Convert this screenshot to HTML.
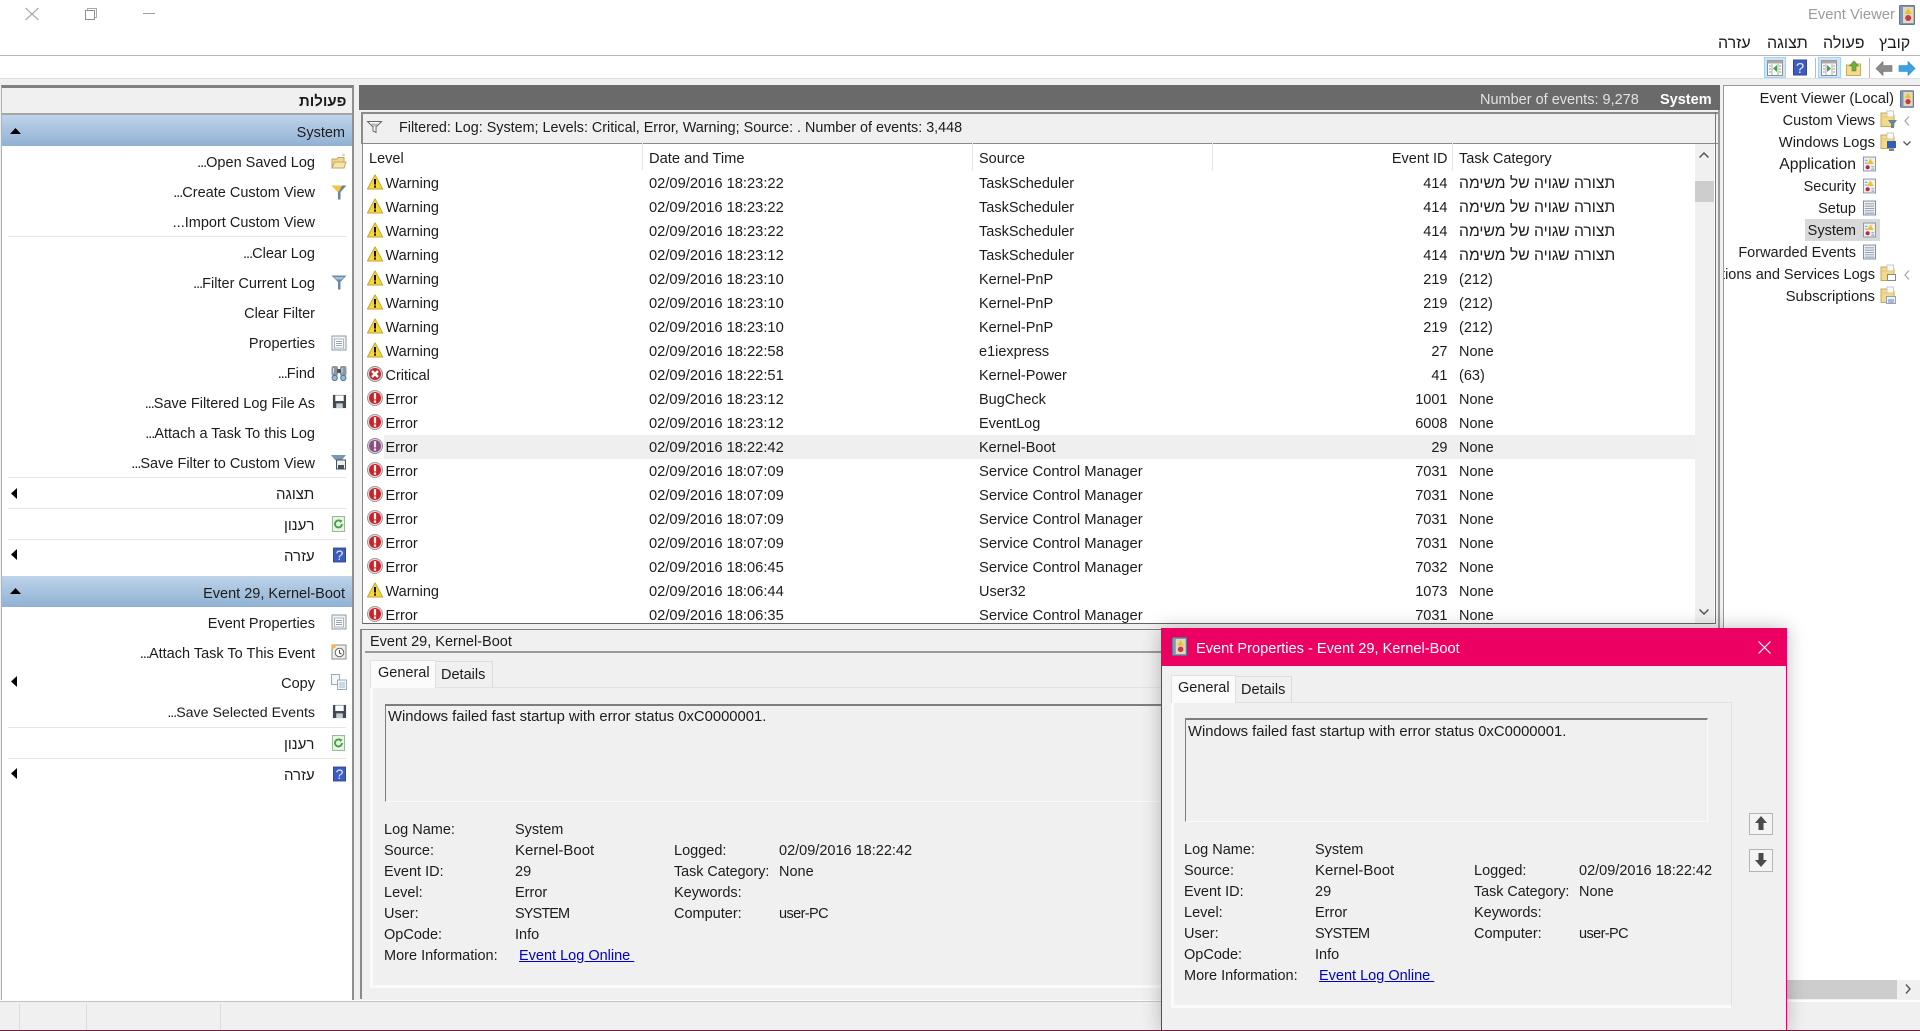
<!DOCTYPE html>
<html lang="en"><head><meta charset="utf-8"><title>Event Viewer</title>
<style>
html,body{margin:0;padding:0;width:1920px;height:1031px;overflow:hidden;background:#f0f0f0}
body{font-family:"Liberation Sans","DejaVu Sans",sans-serif;font-size:14.5px;color:#1c1c1c;position:relative}
.a{position:absolute}
.t{position:absolute;white-space:nowrap;line-height:20px;height:20px;margin-top:1px}
.l{position:absolute;right:1605px;white-space:nowrap;line-height:20px;height:20px;text-align:right;margin-top:1px}
.tr{position:absolute;right:25px;white-space:nowrap;line-height:20px;height:20px;text-align:right;margin-top:1px}
.d{letter-spacing:-1px}
svg{position:absolute;overflow:visible}
.sep{position:absolute;left:8px;width:338px;height:1px;background:#e6e6e6}
.r{position:relative;height:24px;line-height:24px;white-space:nowrap}
.r span{position:absolute;top:1px}
.r svg{left:4px;top:3px}
.hd span{top:2px}
.c1{left:22.5px}.c2{left:286px;font-size:14.7px}.c3{left:616px}.c4{left:984px;width:100.5px;text-align:right}.c5{left:1096px}
.he{font-size:15.7px}
.sel{background:linear-gradient(#efefef,#efefef) no-repeat 21px 0}
.h{position:absolute;top:143px;height:27px;width:1px;background:#e4e4e4}
a{color:#0000c8;text-decoration:underline}
</style></head><body>
<svg width="0" height="0" style="position:absolute">
<defs>
<symbol id="w" viewBox="0 0 16 16"><polygon points="8,.8 15.6,15 .4,15" fill="#f6d838" stroke="#c9a326" stroke-linejoin="round"/><rect x="7" y="5" width="2" height="5.6" fill="#111"/><rect x="7" y="11.6" width="2" height="2" fill="#111"/></symbol>
<symbol id="e" viewBox="0 0 16 16"><circle cx="8" cy="8" r="7.500" fill="#e9dcdc" stroke="#9d9d9d"/><circle cx="8" cy="8" r="6" fill="#cc2229"/><rect x="6.900" y="3.200" width="2.200" height="6.200" fill="#fff"/><rect x="6.900" y="10.500" width="2.200" height="2.200" fill="#fff"/></symbol>
<symbol id="es" viewBox="0 0 16 16"><circle cx="8" cy="8" r="7.500" fill="#d3cdd8" stroke="#8f8f9d"/><circle cx="8" cy="8" r="6" fill="#8d4c7d"/><rect x="6.900" y="3.200" width="2.200" height="6.200" fill="#eee"/><rect x="6.900" y="10.500" width="2.200" height="2.200" fill="#eee"/></symbol>
<symbol id="c" viewBox="0 0 16 16"><circle cx="8" cy="8" r="7.500" fill="#ddd" stroke="#8d8d8d"/><circle cx="8" cy="8" r="6" fill="#c42a32"/><path d="M5 5l6 6M11 5l-6 6" stroke="#fff" stroke-width="2.400"/></symbol>
<symbol id="logw" viewBox="0 0 14 16"><rect x=".5" y=".5" width="13" height="15" fill="#eef0f2" stroke="#7f93aa"/><path d="M2 4h3M2 7h3M9 11h3M9 13.500h3" stroke="#7f93aa"/><polygon points="8,2 11.500,8 4.500,8" fill="#eec22e"/><circle cx="5" cy="11.500" r="2.200" fill="#b32a3c"/></symbol>
<symbol id="log" viewBox="0 0 14 16"><rect x=".5" y=".5" width="13" height="15" fill="#eef1f4" stroke="#77899b"/><path d="M2 3.500h10M2 6h10M2 8.500h10M2 11h10M2 13.500h10" stroke="#8599ab"/></symbol>
<symbol id="evt" viewBox="0 0 16 20"><rect x=".5" y=".5" width="15" height="19" rx="1" fill="#7f96b4" stroke="#66768c"/><rect x="4" y="2" width="10.500" height="16" fill="#e3d9b8"/><polygon points="9.200,3 12.700,9 5.700,9" fill="#e8bf2c"/><circle cx="9.200" cy="13" r="3" fill="#c33b46"/></symbol>
<symbol id="fo" viewBox="0 0 16 18"><path d="M1 16.500V3h5l1.500 2H14v11.500z" fill="#f3d98a" stroke="#c4a85c"/><rect x="7" y="1" width="6.500" height="6" fill="#fafafa" stroke="#c9c9c9"/><path d="M1 7h13" stroke="#e3c676"/></symbol>
<symbol id="open" viewBox="0 0 16 16"><path d="M1 14V5h5l1-1.500h6V14z" fill="#f0d993" stroke="#bfa463"/><path d="M1 14l2.500-6H15l-2 6z" fill="#f8e6a8" stroke="#c3a864"/><path d="M11 1h3" stroke="#9bb"/></symbol>
<symbol id="fy" viewBox="0 0 16 16"><path d="M.5 1.500h15L9.500 8v7.500H7V8z" fill="#67839f"/><path d="M.5 1.500H11L8 7.500H6z" fill="#f4c640"/></symbol>
<symbol id="fb" viewBox="0 0 16 16"><path d="M.5 1.500h15L9.500 8v7.500H7V8z" fill="#678aa8"/><path d="M3 3h10l-2.500 2.500h-5z" fill="#a9c0d4"/></symbol>
<symbol id="prop" viewBox="0 0 16 16"><rect x="1" y="1" width="14" height="14" fill="#f2f2f2" stroke="#8e99a3"/><rect x="3.500" y="4" width="9" height="9" fill="#fff" stroke="#a9b6c1"/><path d="M5 6.500h6M5 8.500h6M5 10.500h6" stroke="#94a4b1"/></symbol>
<symbol id="bin" viewBox="0 0 16 16"><rect x=".5" y="1" width="6.500" height="10" rx="2" fill="#8c97a3"/><rect x="9" y="1" width="6.500" height="10" rx="2" fill="#8c97a3"/><path d="M2.500 3v5M11 3v5" stroke="#d5dbe1"/><rect x="6" y="4" width="4" height="4" fill="#4c5661"/><circle cx="3.700" cy="13" r="2.600" fill="#8fbce0" stroke="#4d7499"/><circle cx="12.300" cy="13" r="2.600" fill="#8fbce0" stroke="#4d7499"/></symbol>
<symbol id="sv" viewBox="0 0 16 16"><rect x="1" y="1" width="14" height="14" fill="#3f4a54"/><rect x="3.500" y="1.500" width="9" height="6" fill="#fff"/><rect x="4.500" y="10" width="7" height="5" fill="#c9ced2"/></symbol>
<symbol id="sf" viewBox="0 0 16 16"><path d="M0 1h15l-4 5H4z" fill="#7b97ae"/><rect x="5.500" y="6" width="9" height="9" fill="#eee" stroke="#48525c"/><rect x="7" y="11" width="6" height="4" fill="#48525c"/></symbol>
<symbol id="rf" viewBox="0 0 16 16"><rect x="1.500" y=".5" width="12" height="15" fill="#e8f3e2" stroke="#9cb79a"/><path d="M11 8a3.500 3.500 0 1 1-1.200-2.700" fill="none" stroke="#3fa145" stroke-width="1.800"/><path d="M8 3.500l3.500 1-2 2.500z" fill="#3fa145"/></symbol>
<symbol id="hp" viewBox="0 0 14 16"><rect x=".5" y=".5" width="13" height="15" fill="#3d5cc0" stroke="#2f4599"/><text x="7" y="13.500" font-size="15" fill="#e8eefc" text-anchor="middle" font-family="Liberation Sans">?</text></symbol>
<symbol id="clk" viewBox="0 0 16 16"><rect x="1" y="1" width="14" height="14" fill="#f0eee8" stroke="#8c8c8c"/><circle cx="8.500" cy="8.500" r="4.300" fill="#fff" stroke="#666"/><path d="M8.500 6v3l2 1" stroke="#444" fill="none"/><circle cx="2.500" cy="2.500" r="2" fill="#f4b642"/></symbol>
<symbol id="cp" viewBox="0 0 16 16"><rect x=".5" y=".5" width="8" height="10" fill="#f5f8fa" stroke="#98abba"/><rect x="6.500" y="6" width="9" height="9.500" fill="#f5f8fa" stroke="#98abba"/><path d="M8 9h6M8 11h6M8 13h6" stroke="#a8b9c7"/></symbol>
<symbol id="tb1" viewBox="0 0 16 16"><rect x=".5" y=".5" width="15" height="15" fill="#fff" stroke="#8c8c8c"/><rect x=".5" y=".5" width="15" height="3" fill="#a8a8a8"/><path d="M5 4v11M11 4v11" stroke="#a8a8a8"/><path d="M2 6h2M2 9h2M2 12h2M12 6h2M12 9h2M12 12h2" stroke="#909090"/></symbol>
</defs></svg>

<!-- title bar -->
<div class="a" style="left:0;top:0;width:1920px;height:55px;background:#fff"></div>
<svg style="left:25px;top:8px" width="14" height="12" viewBox="0 0 14 12"><path d="M.5 0l13 12M13.500 0L.5 12" stroke="#9a9a9a" fill="none"/></svg>
<svg style="left:85px;top:8px" width="12" height="12" viewBox="0 0 12 12"><path d="M2.500 2.500V.5h9v9h-2" stroke="#aaa" fill="none"/><rect x=".5" y="2.500" width="9" height="9" fill="#fff" stroke="#909090"/></svg>
<div class="a" style="left:143px;top:13px;width:12px;height:1px;background:#a0a0a0"></div>
<div class="t" style="left:1808px;top:4px;color:#9a9a9a;font-size:14.8px">Event Viewer</div>
<svg style="left:1899px;top:5px" width="16" height="20"><use href="#evt"/></svg>

<!-- menu -->
<div class="t" dir="rtl" style="left:1879px;top:33px;font-size:16px">קובץ</div>
<div class="t" dir="rtl" style="left:1823px;top:33px;font-size:16px">פעולה</div>
<div class="t" dir="rtl" style="left:1767px;top:33px;font-size:16px">תצוגה</div>
<div class="t" dir="rtl" style="left:1718px;top:33px;font-size:16px">עזרה</div>
<div class="a" style="left:0;top:55px;width:1920px;height:1px;background:#b9b9b9"></div>

<!-- toolbar -->
<div class="a" style="left:0;top:56px;width:1920px;height:22px;background:#fff"></div>
<div class="a" style="left:0;top:78px;width:1920px;height:1px;background:#dedede"></div>
<div class="a" style="left:1764px;top:57px;width:22px;height:21px;background:#cfe6f8;border:1px solid #a5d2f4;box-sizing:border-box"></div>
<svg style="left:1767px;top:60px" width="16" height="16"><use href="#tb1"/></svg><svg style="left:1773px;top:65px" width="4" height="7"><polygon points="0,3.500 4,0 4,7" fill="#3aa24a"/></svg>
<svg style="left:1793px;top:59px" width="14" height="17"><use href="#hp"/></svg>
<div class="a" style="left:1815px;top:58px;width:1px;height:20px;background:#bbb"></div>
<div class="a" style="left:1818px;top:57px;width:23px;height:21px;background:#cfe6f8;border:1px solid #a5d2f4;box-sizing:border-box"></div>
<svg style="left:1821px;top:60px" width="16" height="16"><use href="#tb1"/></svg><svg style="left:1827px;top:65px" width="4" height="7"><polygon points="4,3.500 0,0 0,7" fill="#3aa24a"/></svg>
<svg style="left:1846px;top:60px" width="15" height="16" viewBox="0 0 15 16"><path d="M.5 15.500V5h5l1-1h8v11.500z" fill="#f4db8f" stroke="#c7ab60"/><path d="M8 1l4.500 5h-2.500v5H6V6H3.500z" fill="#6fae3f" stroke="#4f8a2e" stroke-width=".6"/></svg>
<div class="a" style="left:1869px;top:58px;width:1px;height:20px;background:#bbb"></div>
<svg style="left:1876px;top:61px" width="16" height="15" viewBox="0 0 16 15"><path d="M0 7.500L7 .5v4h9v6H7v4z" fill="#8c8c8c" stroke="#6d6d6d" stroke-width=".6"/></svg>
<svg style="left:1899px;top:61px" width="16" height="15" viewBox="0 0 16 15"><path d="M16 7.500L9 .5v4H0v6h9v4z" fill="#3ca2e4" stroke="#2a84c4" stroke-width=".6"/></svg>

<!-- left actions pane -->
<div class="a" style="left:1px;top:85px;width:353px;height:915px;background:#fff;border-top:3px solid #808080;border-left:1px solid #b0b0b0;border-right:2px solid #8f8f8f;box-sizing:border-box"></div>
<div class="a" style="left:2px;top:88px;width:350px;height:25px;background:#f0f0f0;border-bottom:2px solid #a6a6a6"></div>
<div class="t" dir="rtl" style="left:299px;top:91px;font-weight:bold;font-size:15px">פעולות</div>

<div class="a" style="left:2px;top:115px;width:350px;height:31px;background:linear-gradient(#bed4ea,#90b1d3)"></div>
<svg style="left:10px;top:128px" width="11" height="6"><polygon points="5.500,0 11,6 0,6" fill="#000"/></svg>
<div class="tr" style="right:1575px;top:122px">System</div>

<svg style="left:331px;top:154px" width="16" height="16"><use href="#open"/></svg>
<div class="l" style="top:152px"><span class="d">...</span>Open Saved Log</div>
<svg style="left:331px;top:184px" width="16" height="16"><use href="#fy"/></svg>
<div class="l" style="top:182px"><span class="d">...</span>Create Custom View</div>
<div class="l" style="top:212px">...Import Custom View</div>
<div class="sep" style="top:236px"></div>
<div class="l" style="top:243px"><span class="d">...</span>Clear Log</div>
<svg style="left:331px;top:274px" width="16" height="16"><use href="#fb"/></svg>
<div class="l" style="top:273px"><span class="d">...</span>Filter Current Log</div>
<div class="l" style="top:303px">Clear Filter</div>
<svg style="left:331px;top:335px" width="16" height="16"><use href="#prop"/></svg>
<div class="l" style="top:333px">Properties</div>
<svg style="left:331px;top:365px" width="16" height="16"><use href="#bin"/></svg>
<div class="l" style="top:363px"><span class="d">...</span>Find</div>
<svg style="left:332px;top:394px" width="15" height="15"><use href="#sv"/></svg>
<div class="l" style="top:393px"><span class="d">...</span>Save Filtered Log File As</div>
<div class="l" style="top:423px"><span class="d">...</span>Attach a Task To this Log</div>
<svg style="left:331px;top:454px" width="16" height="16"><use href="#sf"/></svg>
<div class="l" style="top:453px"><span class="d">...</span>Save Filter to Custom View</div>
<div class="sep" style="top:477px"></div>
<svg style="left:11px;top:488px" width="6" height="11"><polygon points="0,5.500 6,0 6,11" fill="#000"/></svg>
<div class="t" dir="rtl" style="left:276px;top:484px;font-size:15px">תצוגה</div>
<div class="sep" style="top:508px"></div>
<svg style="left:331px;top:516px" width="16" height="16"><use href="#rf"/></svg>
<div class="t" dir="rtl" style="left:284px;top:515px;font-size:15px">רענון</div>
<div class="sep" style="top:539px"></div>
<svg style="left:11px;top:549px" width="6" height="11"><polygon points="0,5.500 6,0 6,11" fill="#000"/></svg>
<svg style="left:333px;top:547px" width="13" height="16"><use href="#hp"/></svg>
<div class="t" dir="rtl" style="left:284px;top:546px;font-size:15px">עזרה</div>

<div class="a" style="left:2px;top:576px;width:350px;height:31px;background:linear-gradient(#bed4ea,#90b1d3)"></div>
<svg style="left:10px;top:588px" width="11" height="6"><polygon points="5.500,0 11,6 0,6" fill="#000"/></svg>
<div class="tr" style="right:1575px;top:583px">Event 29, Kernel-Boot</div>

<svg style="left:331px;top:614px" width="16" height="16"><use href="#prop"/></svg>
<div class="l" style="top:613px">Event Properties</div>
<svg style="left:331px;top:644px" width="16" height="16"><use href="#clk"/></svg>
<div class="l" style="top:643px"><span class="d">...</span>Attach Task To This Event</div>
<svg style="left:11px;top:676px" width="6" height="11"><polygon points="0,5.500 6,0 6,11" fill="#000"/></svg>
<svg style="left:331px;top:674px" width="16" height="16"><use href="#cp"/></svg>
<div class="l" style="top:673px">Copy</div>
<svg style="left:332px;top:704px" width="15" height="15"><use href="#sv"/></svg>
<div class="l" style="top:702px;font-size:14.2px"><span class="d">...</span>Save Selected Events</div>
<div class="sep" style="top:727px"></div>
<svg style="left:331px;top:735px" width="16" height="16"><use href="#rf"/></svg>
<div class="t" dir="rtl" style="left:284px;top:734px;font-size:15px">רענון</div>
<div class="sep" style="top:758px"></div>
<svg style="left:11px;top:768px" width="6" height="11"><polygon points="0,5.500 6,0 6,11" fill="#000"/></svg>
<svg style="left:333px;top:766px" width="13" height="16"><use href="#hp"/></svg>
<div class="t" dir="rtl" style="left:284px;top:765px;font-size:15px">עזרה</div>

<!-- center header -->
<div class="a" style="left:359px;top:85px;width:1361px;height:25px;background:#6a6a6a"></div>
<div class="t" style="left:1480px;top:89px;color:#e2e2e2">Number of events: 9,278</div>
<div class="t" style="left:1660px;top:89px;color:#fff;font-weight:bold">System</div>

<!-- filter bar -->
<div class="a" style="left:361px;top:112px;width:1358px;height:32px;background:#f0f0f0;border:1px solid #8a8a8a;border-width:2px 1px 1px 2px;box-sizing:border-box"></div>
<svg style="left:367px;top:121px" width="15" height="12" viewBox="0 0 15 12"><path d="M.5.500h14L9 6v5.500L6 10V6z" fill="#fff" stroke="#666"/><path d="M3 2.500h9L9 5.500H6z" fill="#bbb"/></svg>
<div class="t" style="left:399px;top:117px;font-size:14.35px">Filtered: Log: System; Levels: Critical, Error, Warning; Source: . Number of events: 3,448</div>

<!-- list -->
<div class="a" style="left:362px;top:144px;width:1353px;height:480px;background:#fff;border-bottom:1px solid #666;border-left:1px solid #8a8a8a;box-sizing:border-box;overflow:hidden">
<div class="r hd" style="height:27px;line-height:27px"><span style="left:6px">Level</span><span class="c2">Date and Time</span><span class="c3">Source</span><span class="c4">Event ID</span><span class="c5">Task Category</span></div>
<div style="width:1332px">
<div class="r"><svg width="16" height="16"><use href="#w"/></svg><span class="c1">Warning</span><span class="c2">02/09/2016 18:23:22</span><span class="c3">TaskScheduler</span><span class="c4">414</span><span class="c5 he" dir="rtl">תצורה שגויה של משימה</span></div>
<div class="r"><svg width="16" height="16"><use href="#w"/></svg><span class="c1">Warning</span><span class="c2">02/09/2016 18:23:22</span><span class="c3">TaskScheduler</span><span class="c4">414</span><span class="c5 he" dir="rtl">תצורה שגויה של משימה</span></div>
<div class="r"><svg width="16" height="16"><use href="#w"/></svg><span class="c1">Warning</span><span class="c2">02/09/2016 18:23:22</span><span class="c3">TaskScheduler</span><span class="c4">414</span><span class="c5 he" dir="rtl">תצורה שגויה של משימה</span></div>
<div class="r"><svg width="16" height="16"><use href="#w"/></svg><span class="c1">Warning</span><span class="c2">02/09/2016 18:23:12</span><span class="c3">TaskScheduler</span><span class="c4">414</span><span class="c5 he" dir="rtl">תצורה שגויה של משימה</span></div>
<div class="r"><svg width="16" height="16"><use href="#w"/></svg><span class="c1">Warning</span><span class="c2">02/09/2016 18:23:10</span><span class="c3">Kernel-PnP</span><span class="c4">219</span><span class="c5">(212)</span></div>
<div class="r"><svg width="16" height="16"><use href="#w"/></svg><span class="c1">Warning</span><span class="c2">02/09/2016 18:23:10</span><span class="c3">Kernel-PnP</span><span class="c4">219</span><span class="c5">(212)</span></div>
<div class="r"><svg width="16" height="16"><use href="#w"/></svg><span class="c1">Warning</span><span class="c2">02/09/2016 18:23:10</span><span class="c3">Kernel-PnP</span><span class="c4">219</span><span class="c5">(212)</span></div>
<div class="r"><svg width="16" height="16"><use href="#w"/></svg><span class="c1">Warning</span><span class="c2">02/09/2016 18:22:58</span><span class="c3">e1iexpress</span><span class="c4">27</span><span class="c5">None</span></div>
<div class="r"><svg width="16" height="16"><use href="#c"/></svg><span class="c1">Critical</span><span class="c2">02/09/2016 18:22:51</span><span class="c3">Kernel-Power</span><span class="c4">41</span><span class="c5">(63)</span></div>
<div class="r"><svg width="16" height="16"><use href="#e"/></svg><span class="c1">Error</span><span class="c2">02/09/2016 18:23:12</span><span class="c3">BugCheck</span><span class="c4">1001</span><span class="c5">None</span></div>
<div class="r"><svg width="16" height="16"><use href="#e"/></svg><span class="c1">Error</span><span class="c2">02/09/2016 18:23:12</span><span class="c3">EventLog</span><span class="c4">6008</span><span class="c5">None</span></div>
<div class="r sel"><svg width="16" height="16"><use href="#es"/></svg><span class="c1">Error</span><span class="c2">02/09/2016 18:22:42</span><span class="c3">Kernel-Boot</span><span class="c4">29</span><span class="c5">None</span></div>
<div class="r"><svg width="16" height="16"><use href="#e"/></svg><span class="c1">Error</span><span class="c2">02/09/2016 18:07:09</span><span class="c3" style="font-size:14.8px">Service Control Manager</span><span class="c4">7031</span><span class="c5">None</span></div>
<div class="r"><svg width="16" height="16"><use href="#e"/></svg><span class="c1">Error</span><span class="c2">02/09/2016 18:07:09</span><span class="c3" style="font-size:14.8px">Service Control Manager</span><span class="c4">7031</span><span class="c5">None</span></div>
<div class="r"><svg width="16" height="16"><use href="#e"/></svg><span class="c1">Error</span><span class="c2">02/09/2016 18:07:09</span><span class="c3" style="font-size:14.8px">Service Control Manager</span><span class="c4">7031</span><span class="c5">None</span></div>
<div class="r"><svg width="16" height="16"><use href="#e"/></svg><span class="c1">Error</span><span class="c2">02/09/2016 18:07:09</span><span class="c3" style="font-size:14.8px">Service Control Manager</span><span class="c4">7031</span><span class="c5">None</span></div>
<div class="r"><svg width="16" height="16"><use href="#e"/></svg><span class="c1">Error</span><span class="c2">02/09/2016 18:06:45</span><span class="c3" style="font-size:14.8px">Service Control Manager</span><span class="c4">7032</span><span class="c5">None</span></div>
<div class="r"><svg width="16" height="16"><use href="#w"/></svg><span class="c1">Warning</span><span class="c2">02/09/2016 18:06:44</span><span class="c3">User32</span><span class="c4">1073</span><span class="c5">None</span></div>
<div class="r"><svg width="16" height="16"><use href="#e"/></svg><span class="c1">Error</span><span class="c2">02/09/2016 18:06:35</span><span class="c3" style="font-size:14.8px">Service Control Manager</span><span class="c4">7031</span><span class="c5">None</span></div>
</div>
</div>
<div class="h" style="left:642px"></div><div class="h" style="left:972px"></div><div class="h" style="left:1212px"></div><div class="h" style="left:1452px"></div>

<!-- list scrollbar -->
<div class="a" style="left:1695px;top:144px;width:19px;height:479px;background:#f0f0f0"></div>
<div class="a" style="left:1695px;top:181px;width:19px;height:21px;background:#cdcdcd"></div>
<svg style="left:1699px;top:152px" width="10" height="6"><path d="M.5 5.500L5 1l4.500 4.500" fill="none" stroke="#555" stroke-width="1.500"/></svg>
<svg style="left:1699px;top:609px" width="10" height="6"><path d="M.5.500L5 5l4.500-4.500" fill="none" stroke="#555" stroke-width="1.500"/></svg>
<div class="a" style="left:1715px;top:112px;width:1px;height:512px;background:#777"></div>
<div class="a" style="left:1718px;top:110px;width:2px;height:518px;background:#9a9a9a"></div>

<!-- bottom pane -->
<div class="a" style="left:360px;top:629px;width:1363px;height:370px;background:#f0f0f0;border-top:1px solid #808080;border-left:2px solid #8a8a8a;box-sizing:border-box"></div>
<div class="t" style="left:370px;top:631px">Event 29, Kernel-Boot</div>
<div class="a" style="left:365px;top:651px;width:1358px;height:2px;background:#9a9a9a"></div>
<div class="a" style="left:370px;top:687px;width:1353px;height:301px;background:#f0f0f0;border:1px solid #e2e2e2;border-left:3px solid #fafafa;border-bottom:3px solid #fafafa;box-sizing:border-box"></div>
<div class="a" style="left:370px;top:660px;width:66px;height:28px;background:#fbfbfb;border:1px solid #e2e2e2;border-bottom:0;box-sizing:border-box"></div>
<div class="a" style="left:436px;top:661px;width:57px;height:26px;background:#f0f0f0;border:1px solid #dcdcdc;border-bottom:0;border-left:0;box-sizing:border-box"></div>
<div class="t" style="left:378px;top:662px">General</div>
<div class="t" style="left:441px;top:664px">Details</div>
<div class="a" style="left:385px;top:704px;width:800px;height:98px;border-top:2px solid #7e7e7e;border-left:1px solid #7e7e7e;border-bottom:1px solid #fafafa;box-sizing:border-box"></div>
<div class="t" style="left:388px;top:706px;font-size:14.8px">Windows failed fast startup with error status 0xC0000001.</div>
<div class="t" style="left:384px;top:819px">Log Name:</div><div class="t" style="left:515px;top:819px">System</div>
<div class="t" style="left:384px;top:840px">Source:</div><div class="t" style="left:515px;top:840px;font-size:15px">Kernel-Boot</div>
<div class="t" style="left:674px;top:840px">Logged:</div><div class="t" style="left:779px;top:840px">02/09/2016 18:22:42</div>
<div class="t" style="left:384px;top:861px">Event ID:</div><div class="t" style="left:515px;top:861px">29</div>
<div class="t" style="left:674px;top:861px;font-size:14.3px">Task Category:</div><div class="t" style="left:779px;top:861px">None</div>
<div class="t" style="left:384px;top:882px">Level:</div><div class="t" style="left:515px;top:882px">Error</div>
<div class="t" style="left:674px;top:882px">Keywords:</div>
<div class="t" style="left:384px;top:903px">User:</div><div class="t" style="left:515px;top:903px;letter-spacing:-.9px">SYSTEM</div>
<div class="t" style="left:674px;top:903px">Computer:</div><div class="t" style="left:779px;top:903px;letter-spacing:-.6px">user-PC</div>
<div class="t" style="left:384px;top:924px">OpCode:</div><div class="t" style="left:515px;top:924px">Info</div>
<div class="t" style="left:384px;top:945px">More Information:</div><div class="t" style="left:519px;top:945px"><a>Event Log Online&nbsp;</a></div>

<!-- status -->
<div class="a" style="left:0;top:1000px;width:1920px;height:1px;background:#fbfbfb"></div>
<div class="a" style="left:0;top:1001px;width:1920px;height:1px;background:#c6c6c6"></div>
<div class="a" style="left:19px;top:1004px;width:1px;height:26px;background:#dcdcdc"></div>
<div class="a" style="left:86px;top:1004px;width:1px;height:26px;background:#dcdcdc"></div>
<div class="a" style="left:220px;top:1004px;width:1px;height:26px;background:#dcdcdc"></div>

<!-- right tree pane -->
<div class="a" style="left:1723px;top:85px;width:197px;height:917px;background:#fff;border-left:1px solid #9a9a9a;border-top:1px solid #9a9a9a;box-sizing:border-box;overflow:hidden">
<div class="t" style="right:26px;top:2px;font-size:14.6px">Event Viewer (Local)</div>
<div class="t" style="right:45px;top:24px">Custom Views</div>
<div class="t" style="right:45px;top:46px;font-size:14.8px">Windows Logs</div>
<div class="t" style="right:64px;top:68px;font-size:15.7px">Application</div>
<div class="t" style="right:64px;top:90px">Security</div>
<div class="t" style="right:64px;top:112px">Setup</div>
<div class="a" style="left:81px;top:133px;width:75px;height:22px;background:#d9d9d9"></div>
<div class="t" style="right:64px;top:134px">System</div>
<div class="t" style="right:64px;top:156px">Forwarded Events</div>
<div class="t" style="right:45px;top:178px">Applications and Services Logs</div>
<div class="t" style="right:45px;top:200px;font-size:14.9px">Subscriptions</div>
</div>
<svg style="left:1900px;top:90px" width="14" height="18"><use href="#evt"/></svg>
<svg style="left:1880px;top:110px" width="16" height="18"><use href="#fo"/></svg><svg style="left:1888px;top:120px" width="9" height="8"><path d="M0 0h9L6 4v4H3V4z" fill="#67839f"/></svg>
<svg style="left:1904px;top:116px" width="6" height="10"><path d="M5 .5L1 5l4 4.500" fill="none" stroke="#aaa" stroke-width="1.300"/></svg>
<svg style="left:1880px;top:132px" width="16" height="18"><use href="#fo"/></svg><svg style="left:1886px;top:141px" width="11" height="10"><rect x="1" y="0" width="9" height="7" fill="#2c5fc0"/><rect x="3" y="8" width="5" height="2" fill="#67839f"/></svg>
<svg style="left:1903px;top:141px" width="8" height="5"><path d="M.5.500L4 4l3.500-3.500" fill="none" stroke="#555" stroke-width="1.300"/></svg>
<svg style="left:1863px;top:156px" width="13" height="16"><use href="#logw"/></svg>
<svg style="left:1863px;top:178px" width="13" height="16"><use href="#logw"/></svg>
<svg style="left:1863px;top:200px" width="13" height="16"><use href="#log"/></svg>
<svg style="left:1863px;top:222px" width="13" height="16"><use href="#logw"/></svg>
<svg style="left:1863px;top:244px" width="13" height="16"><use href="#log"/></svg>
<svg style="left:1880px;top:264px" width="16" height="18"><use href="#fo"/></svg><svg style="left:1887px;top:274px" width="9" height="7"><rect x=".5" y=".5" width="8" height="6" fill="#fff" stroke="#888"/></svg>
<svg style="left:1904px;top:270px" width="6" height="10"><path d="M5 .5L1 5l4 4.500" fill="none" stroke="#aaa" stroke-width="1.300"/></svg>
<svg style="left:1880px;top:286px" width="16" height="18"><use href="#fo"/></svg><svg style="left:1886px;top:296px" width="10" height="8"><rect x=".5" y=".5" width="9" height="7" fill="#eef2f8" stroke="#9a9fb0"/><path d="M2 4h6M2 6h6" stroke="#5f7fb8"/></svg>

<!-- right hscroll -->
<div class="a" style="left:1724px;top:980px;width:196px;height:20px;background:#f0f0f0"></div>
<div class="a" style="left:1724px;top:980px;width:173px;height:19px;background:#cdcdcd"></div>
<svg style="left:1905px;top:984px" width="6" height="10"><path d="M1 .5L5 5 1 9.500" fill="none" stroke="#555" stroke-width="1.400"/></svg>

<!-- dialog -->
<div class="a" style="left:1161px;top:628px;width:626px;height:403px;background:#f0f0f0;border:1px solid #ec0062;border-top:0;box-sizing:border-box;box-shadow:0 0 18px rgba(0,0,0,.25)"></div>
<div class="a" style="left:1161px;top:628px;width:626px;height:38px;background:#ec0062"></div>
<svg style="left:1172px;top:637px" width="15" height="19"><use href="#evt"/></svg>
<div class="t" style="left:1196px;top:638px;color:#fff;font-size:14.6px">Event Properties - Event 29, Kernel-Boot</div>
<svg style="left:1758px;top:641px" width="13" height="13"><path d="M.5.500l12 12M12.500.5l-12 12" stroke="#fff" stroke-width="1.200" fill="none"/></svg>

<div class="a" style="left:1171px;top:702px;width:561px;height:306px;background:#f0f0f0;border:1px solid #e2e2e2;border-left:3px solid #fafafa;border-bottom:3px solid #fafafa;box-sizing:border-box"></div>
<div class="a" style="left:1171px;top:675px;width:65px;height:28px;background:#fbfbfb;border:1px solid #e2e2e2;border-bottom:0;box-sizing:border-box"></div>
<div class="a" style="left:1236px;top:676px;width:56px;height:26px;background:#f0f0f0;border:1px solid #dcdcdc;border-bottom:0;border-left:0;box-sizing:border-box"></div>
<div class="t" style="left:1178px;top:677px">General</div>
<div class="t" style="left:1241px;top:679px">Details</div>
<div class="a" style="left:1185px;top:718px;width:523px;height:104px;border-top:2px solid #7e7e7e;border-left:1px solid #7e7e7e;border-bottom:1px solid #fafafa;border-right:1px solid #fafafa;box-sizing:border-box"></div>
<div class="t" style="left:1188px;top:721px;font-size:14.8px">Windows failed fast startup with error status 0xC0000001.</div>
<div class="t" style="left:1184px;top:839px">Log Name:</div><div class="t" style="left:1315px;top:839px">System</div>
<div class="t" style="left:1184px;top:860px">Source:</div><div class="t" style="left:1315px;top:860px;font-size:15px">Kernel-Boot</div>
<div class="t" style="left:1474px;top:860px">Logged:</div><div class="t" style="left:1579px;top:860px">02/09/2016 18:22:42</div>
<div class="t" style="left:1184px;top:881px">Event ID:</div><div class="t" style="left:1315px;top:881px">29</div>
<div class="t" style="left:1474px;top:881px;font-size:14.3px">Task Category:</div><div class="t" style="left:1579px;top:881px">None</div>
<div class="t" style="left:1184px;top:902px">Level:</div><div class="t" style="left:1315px;top:902px">Error</div>
<div class="t" style="left:1474px;top:902px">Keywords:</div>
<div class="t" style="left:1184px;top:923px">User:</div><div class="t" style="left:1315px;top:923px;letter-spacing:-.9px">SYSTEM</div>
<div class="t" style="left:1474px;top:923px">Computer:</div><div class="t" style="left:1579px;top:923px;letter-spacing:-.6px">user-PC</div>
<div class="t" style="left:1184px;top:944px">OpCode:</div><div class="t" style="left:1315px;top:944px">Info</div>
<div class="t" style="left:1184px;top:965px">More Information:</div><div class="t" style="left:1319px;top:965px"><a>Event Log Online&nbsp;</a></div>

<div class="a" style="left:1749px;top:813px;width:24px;height:22px;background:#f4f4f4;border:1px solid #b5b5b5;box-sizing:border-box"></div>
<svg style="left:1755px;top:816px" width="12" height="14"><path d="M6 0l6 7H8.500v7h-5V7H0z" fill="#4a4a4a"/></svg>
<div class="a" style="left:1749px;top:849px;width:24px;height:23px;background:#f4f4f4;border:1px solid #b5b5b5;box-sizing:border-box"></div>
<svg style="left:1755px;top:853px" width="12" height="14"><path d="M6 14l6-7H8.500V0h-5v7H0z" fill="#4a4a4a"/></svg>

<div class="a" style="left:0;top:1030px;width:1920px;height:1px;background:#7a1a3c"></div>
</body></html>
